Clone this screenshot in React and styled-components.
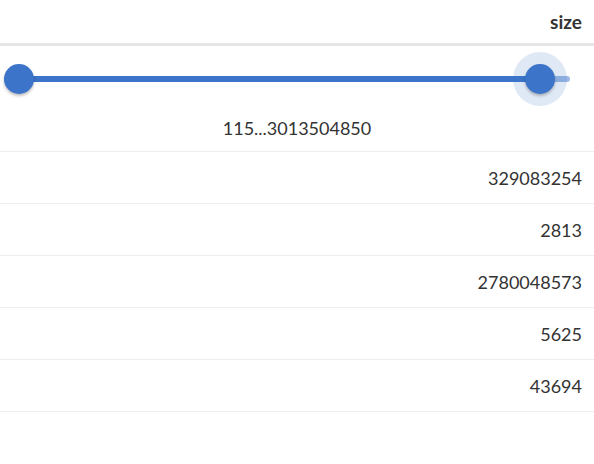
import React from 'react'
import styled, { createGlobalStyle } from 'styled-components'

const Global = createGlobalStyle`
  html, body { margin: 0; padding: 0; background: #fff; }
  body { font-family: Lato, "Open Sans", sans-serif; color: #333; }
`

const Table = styled.div`
  width: 594px;
  display: flex;
  flex-direction: column;
`

const HeaderRow = styled.div`
  height: 43px;
  border-bottom: 3px solid #e6e6e6;
  display: flex;
  align-items: center;
  justify-content: flex-end;
  padding: 0 12px;
  font-weight: 700;
  font-size: 19px;
  color: #333;
`

const FilterCell = styled.div`
  height: 105px;
  border-bottom: 1px solid #eeeeee;
  display: flex;
  flex-direction: column;
  align-items: stretch;
`

const SliderArea = styled.div`
  height: 66px;
  padding: 0 24px 0 4px;
  display: flex;
  align-items: center;
`

const Rail = styled.div`
  position: relative;
  isolation: isolate;
  flex: 1;
  height: 6px;
  border-radius: 3px;
  background: rgba(59, 116, 201, 0.5);
`

const Fill = styled.div`
  position: absolute;
  top: 0;
  bottom: 0;
  background: #3b74c9;
`

const Halo = styled.div`
  position: absolute;
  top: 50%;
  width: 54px;
  height: 54px;
  margin: -27px 0 0 -27px;
  border-radius: 50%;
  background: rgba(59, 116, 201, 0.16);
`

const Thumb = styled.div`
  position: absolute;
  top: 50%;
  width: 30px;
  height: 30px;
  margin: -15px 0 0 -15px;
  border-radius: 50%;
  background: #3b74c9;
  box-shadow: 0 2px 3px rgba(0, 0, 0, 0.25);
`

const RangeLabel = styled.div`
  text-align: center;
  font-size: 18px;
  line-height: 24px;
  padding-top: 4px;
`

const Row = styled.div`
  height: 51px;
  border-bottom: 1px solid #eeeeee;
  display: flex;
  align-items: center;
  justify-content: flex-end;
  padding: 0 12px;
  font-size: 18px;
`

const sizes = ['329083254', '2813', '2780048573', '5625', '43694']
const low = 15
const high = 536

export default function App () {
  return (
    <>
      <Global />
      <Table>
        <HeaderRow>size</HeaderRow>
        <FilterCell>
          <SliderArea>
            <Rail>
              <Halo style={{ left: high }} />
              <Fill style={{ left: low, width: high - low }} />
              <Thumb style={{ left: low }} />
              <Thumb style={{ left: high }} />
            </Rail>
          </SliderArea>
          <RangeLabel>115...3013504850</RangeLabel>
        </FilterCell>
        {sizes.map(s => <Row key={s}>{s}</Row>)}
      </Table>
    </>
  )
}
